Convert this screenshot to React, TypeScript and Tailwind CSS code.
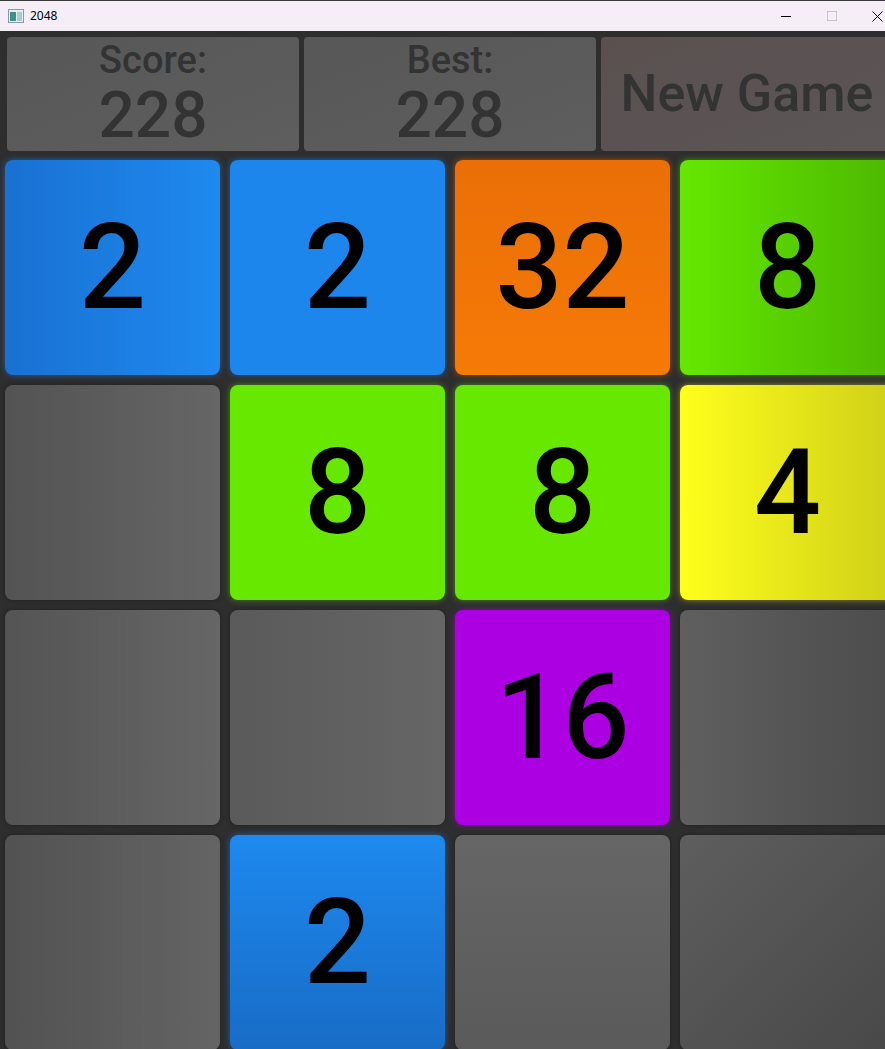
import { useState } from 'react';

type Tile = { value: number | null; bg: string; glow: string };

const font = { fontFamily: 'Roboto, "Noto Sans", sans-serif' };

// board state, row by row
const board: Tile[][] = [
  [
    { value: 2, bg: 'bg-linear-to-r from-[#1971d2] to-[#1e89ef]', glow: 'shadow-[0_0_6px_rgba(30,130,235,0.55)]' },
    { value: 2, bg: 'bg-[#1c86ec]', glow: 'shadow-[0_0_6px_rgba(30,130,235,0.55)]' },
    { value: 32, bg: 'bg-linear-to-b from-[#ea6f06] to-[#f67a06]', glow: 'shadow-[0_0_6px_rgba(240,112,8,0.55)]' },
    { value: 8, bg: 'bg-linear-to-r from-[#64e800] to-[#4cb800]', glow: 'shadow-[0_0_6px_rgba(100,230,0,0.5)]' },
  ],
  [
    { value: null, bg: 'bg-linear-to-r from-[#535353] to-[#666666]', glow: 'shadow-[0_0_4px_rgba(0,0,0,0.35)]' },
    { value: 8, bg: 'bg-[#66e800]', glow: 'shadow-[0_0_6px_rgba(100,230,0,0.5)]' },
    { value: 8, bg: 'bg-[#66e800]', glow: 'shadow-[0_0_6px_rgba(100,230,0,0.5)]' },
    { value: 4, bg: 'bg-linear-to-r from-[#ffff1c] to-[#cfcf18]', glow: 'shadow-[0_0_6px_rgba(240,240,20,0.5)]' },
  ],
  [
    { value: null, bg: 'bg-linear-to-r from-[#545454] to-[#666666]', glow: 'shadow-[0_0_4px_rgba(0,0,0,0.35)]' },
    { value: null, bg: 'bg-linear-to-r from-[#5a5a5a] to-[#666666]', glow: 'shadow-[0_0_4px_rgba(0,0,0,0.35)]' },
    { value: 16, bg: 'bg-[#ad00e2]', glow: 'shadow-[0_0_6px_rgba(175,0,226,0.55)]' },
    { value: null, bg: 'bg-linear-to-r from-[#5f5f5f] to-[#4c4c4c]', glow: 'shadow-[0_0_4px_rgba(0,0,0,0.35)]' },
  ],
  [
    { value: null, bg: 'bg-linear-to-r from-[#525252] to-[#646464]', glow: 'shadow-[0_0_4px_rgba(0,0,0,0.35)]' },
    { value: 2, bg: 'bg-linear-to-b from-[#1d89ef] to-[#186cc6]', glow: 'shadow-[0_0_6px_rgba(30,130,235,0.55)]' },
    { value: null, bg: 'bg-linear-to-b from-[#666666] to-[#5a5a5a]', glow: 'shadow-[0_0_4px_rgba(0,0,0,0.35)]' },
    { value: null, bg: 'bg-linear-to-br from-[#5e5e5e] to-[#484848]', glow: 'shadow-[0_0_4px_rgba(0,0,0,0.35)]' },
  ],
];

function TitleBar() {
  return (
    <div className="flex h-[31px] items-center border-t border-[#3a3a3a] bg-[#f5eef6]">
      <svg width="16" height="14" viewBox="0 0 16 14" className="ml-[8px]">
        <rect x="0.5" y="0.5" width="15" height="13" fill="#e8eef0" stroke="#8a9aa0" />
        <rect x="2" y="3" width="6" height="9" fill="#3f8f8a" />
        <rect x="9" y="3" width="5" height="9" fill="#a8ccd0" />
      </svg>
      <span className="ml-[6px] text-[12px] text-black" style={{ fontFamily: '"Noto Sans", sans-serif' }}>
        2048
      </span>
      <div className="ml-auto flex h-full">
        <div className="flex w-[46px] items-center justify-center">
          <svg width="10" height="10" viewBox="0 0 10 10">
            <line x1="0" y1="5.5" x2="10" y2="5.5" stroke="#000" strokeWidth="1" />
          </svg>
        </div>
        <div className="flex w-[45px] items-center justify-center">
          <svg width="10" height="10" viewBox="0 0 10 10">
            <rect x="0.5" y="0.5" width="9" height="9" fill="none" stroke="#c4c4c4" strokeWidth="1" />
          </svg>
        </div>
        <div className="flex w-[46px] items-center justify-center">
          <svg width="11" height="11" viewBox="0 0 11 11">
            <path d="M0.5 0.5 L10.5 10.5 M10.5 0.5 L0.5 10.5" stroke="#000" strokeWidth="1" />
          </svg>
        </div>
      </div>
    </div>
  );
}

function ScoreBox({ label, value }: { label: string; value: number }) {
  return (
    <div className="flex h-[114px] w-[292px] flex-col items-center gap-[5px] rounded-[4px] bg-linear-to-br from-[#575757] to-[#5e5e5e] pt-[4px] font-medium leading-none text-[#333333]">
      <span className="text-[38px] leading-none">{label}</span>
      <span className="text-[64px] leading-none">{value}</span>
    </div>
  );
}

export default function App() {
  const [score] = useState(228);
  const [best] = useState(228);

  return (
    <div className="h-[1049px] w-[885px] overflow-hidden bg-[#2e2e2e]" style={font}>
      <div className="w-[900px]">
        <TitleBar />

        {/* score header */}
        <div className="ml-[7px] mt-[6px] flex gap-[5px]">
          <ScoreBox label="Score:" value={score} />
          <ScoreBox label="Best:" value={best} />
          <button className="flex h-[114px] w-[292px] items-center justify-center rounded-[4px] bg-linear-to-br from-[#5a5050] to-[#5c5656] text-[52px] font-medium leading-none text-[#333333]">
            New Game
          </button>
        </div>

        {/* board */}
        <div className="ml-[5px] mt-[9px] grid grid-cols-[repeat(4,215px)] grid-rows-[repeat(4,215px)] gap-[10px]">
          {board.flat().map((tile, i) => (
            <div
              key={i}
              className={`flex items-center justify-center rounded-[8px] ${tile.bg} ${tile.glow}`}
            >
              {tile.value !== null && (
                <span className="text-[118px] font-medium leading-none text-black">{tile.value}</span>
              )}
            </div>
          ))}
        </div>
      </div>
    </div>
  );
}
